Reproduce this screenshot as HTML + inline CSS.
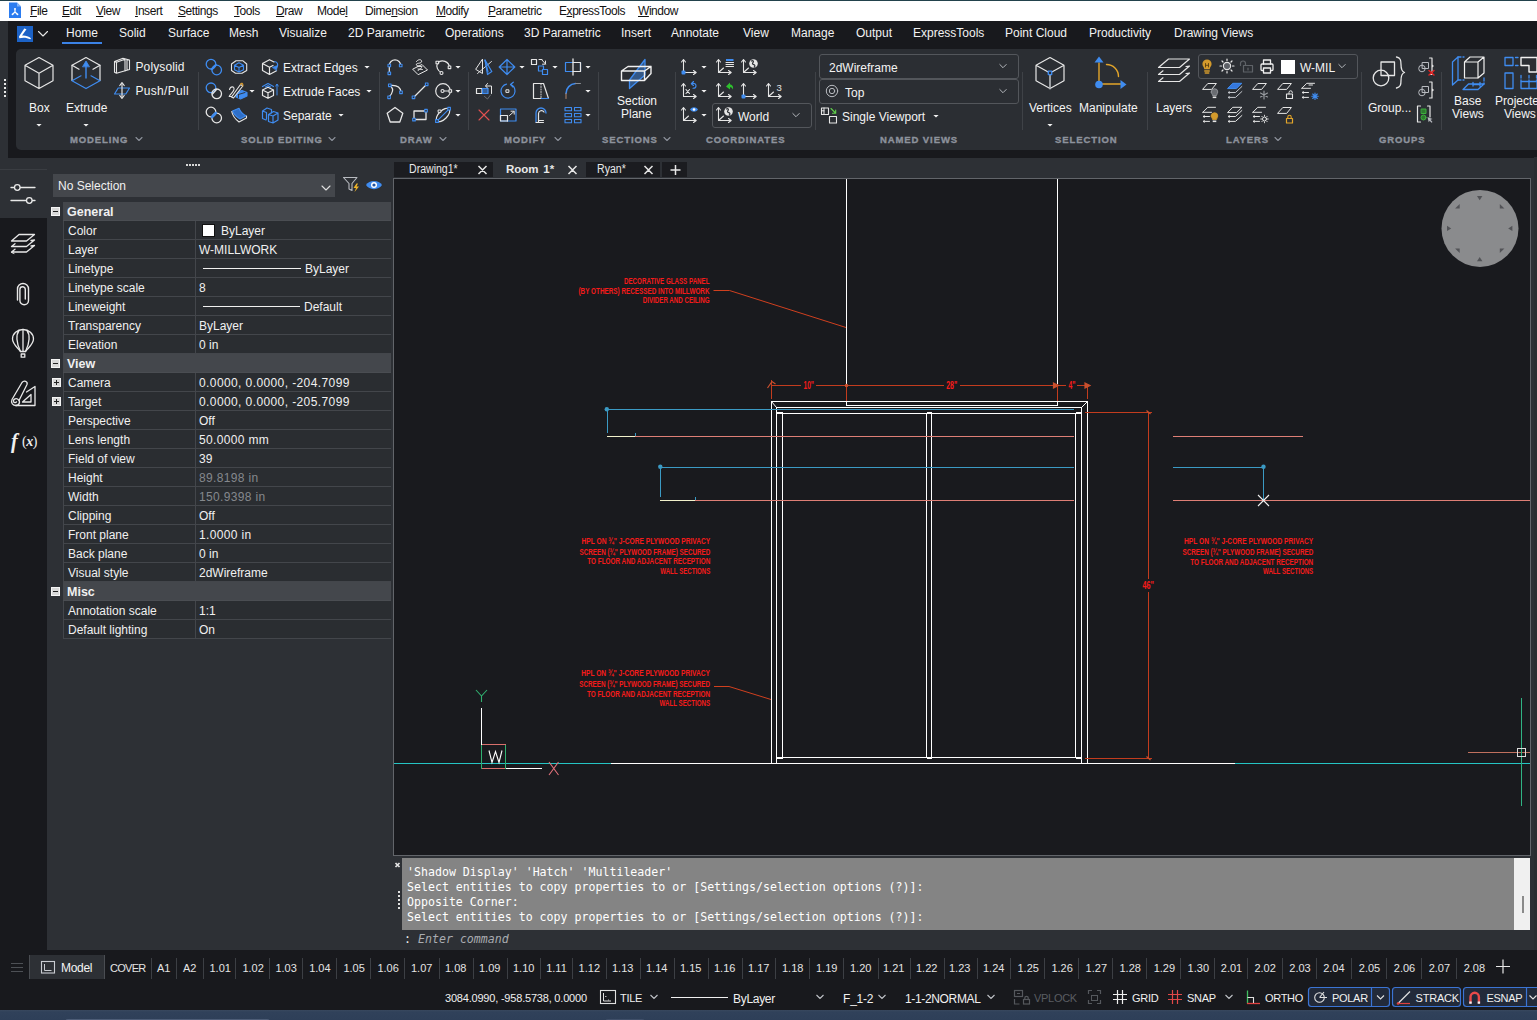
<!DOCTYPE html>
<html lang="en">
<head>
<meta charset="utf-8">
<title>Room 1 - CAD</title>
<style>
*{box-sizing:border-box;margin:0;padding:0}
html,body{width:1537px;height:1020px;overflow:hidden;background:#18191d}
body{position:relative;font-family:"Liberation Sans",sans-serif;font-size:12px;color:#fff;-webkit-font-smoothing:antialiased}
.abs{position:absolute}
svg{position:absolute;overflow:visible}
.t{position:absolute;white-space:nowrap;line-height:1}
/* menu bar */
#menubar{position:absolute;left:0;top:0;width:1537px;height:21px;background:#fff;border-top:1px solid #22424c}
#menubar .t{color:#111;font-size:12px;top:4px;letter-spacing:-0.45px}
#menubar u{text-decoration-thickness:1px;text-underline-offset:1px}
/* ribbon */
#ribbonbg{position:absolute;left:0;top:21px;width:1537px;height:137px;background:#18191d}
#leftstrip{position:absolute;left:0;top:21px;width:8px;height:137px;background:#2d3035}
#tabs .t{font-size:12px;top:27px;color:#f2f2f2}
#ribbon{position:absolute;left:16px;top:49px;width:1540px;height:101px;background:#2b2e33;border-radius:5px}
.sep{position:absolute;width:1px;top:72px;height:58px;background:#3f4247}
.glabel{position:absolute;top:134.700px;font-size:9.5px;font-weight:bold;letter-spacing:0.9px;color:#8d929c;white-space:nowrap;line-height:1;-webkit-text-stroke:0.35px #8d929c}
.rt{position:absolute;white-space:nowrap;line-height:1;font-size:12px;color:#f4f4f4;margin-top:1px}
.dd{position:absolute;border:1px solid #53565b;border-radius:3px;background:#2b2e33}
/* main */
#mainbg{position:absolute;left:0;top:158px;width:1537px;height:792px;background:#2d3035}
#iconstrip{position:absolute;left:0;top:170px;width:47px;height:780px;background:#18191d}

/* left panel */
#props{position:absolute;left:0;top:0;font-size:12px;color:#f0f0f0}
.ph{position:absolute;left:63px;width:328px;height:19px;background:#44474c;font-weight:bold;font-size:12.5px;line-height:19px;border-bottom:1px solid #4a4d52}
.ph span{position:absolute;left:4px;top:1px}
.pm{position:absolute;left:-12px;top:5px;width:9px;height:9px;background:#d8d8d8;border:1px solid #f4f4f4}
.pm b{position:absolute;left:1px;top:3px;width:5px;height:1px;background:#222}
.pm s{position:absolute;left:3px;top:1px;width:1px;height:5px;background:#222}
.pr{position:absolute;left:63px;width:328px;height:19px;line-height:19px;border-bottom:1px solid #43464b;border-left:1px solid #43464b;background:#2a2d31}
.pl{position:absolute;left:4px;top:1px;white-space:nowrap}
.pv{position:absolute;left:131px;top:0;width:197px;height:18px;border-left:1px solid #43464b;padding-left:3px;padding-top:1px;white-space:nowrap}
.pg{color:#85888d}
.sw{position:absolute;left:6px;top:3px;width:13px;height:13px;background:#fff;border:1px solid #111}
.ln{position:absolute;left:7px;top:9px;height:1px;background:#f0f0f0}
.dtab{position:absolute;top:162px;height:15px;background:#1b1c20}
.dtab span{position:absolute;top:1px;white-space:nowrap;font-size:12px;line-height:1;color:#e8e8e8;display:inline-block;transform:scaleX(.88);transform-origin:left center}

.cm{position:absolute;left:407px;margin-top:1px;font-family:"DejaVu Sans Mono","Liberation Mono",monospace;font-size:11.6px;line-height:1;color:#fff;white-space:pre}
.lt{position:absolute;top:963px;font-size:11px;line-height:1;color:#e4e4e4;white-space:nowrap}
.ls{position:absolute;top:958px;width:1px;height:21px;background:#3c3f44}
.st{position:absolute;top:993px;font-size:11px;line-height:1;color:#f0f0f0;white-space:nowrap;letter-spacing:-0.3px}
</style>
</head>
<body>
<div id="menubar">
<span class="t" style="left:30px"><u>F</u>ile</span>
<span class="t" style="left:62px"><u>E</u>dit</span>
<span class="t" style="left:96px"><u>V</u>iew</span>
<span class="t" style="left:135px"><u>I</u>nsert</span>
<span class="t" style="left:178px"><u>S</u>ettings</span>
<span class="t" style="left:234px"><u>T</u>ools</span>
<span class="t" style="left:276px"><u>D</u>raw</span>
<span class="t" style="left:317px">Mode<u>l</u></span>
<span class="t" style="left:365px">Dime<u>n</u>sion</span>
<span class="t" style="left:436px"><u>M</u>odify</span>
<span class="t" style="left:488px"><u>P</u>arametric</span>
<span class="t" style="left:559px">E<u>x</u>pressTools</span>
<span class="t" style="left:638px"><u>W</u>indow</span>
</div>
<div id="ribbonbg"></div>
<div id="leftstrip"></div>
<div id="tabs">
<span class="t" style="left:66px">Home</span>
<span class="t" style="left:119px">Solid</span>
<span class="t" style="left:168px">Surface</span>
<span class="t" style="left:229px">Mesh</span>
<span class="t" style="left:279px">Visualize</span>
<span class="t" style="left:348px">2D Parametric</span>
<span class="t" style="left:445px">Operations</span>
<span class="t" style="left:524px">3D Parametric</span>
<span class="t" style="left:621px">Insert</span>
<span class="t" style="left:671px">Annotate</span>
<span class="t" style="left:743px">View</span>
<span class="t" style="left:791px">Manage</span>
<span class="t" style="left:856px">Output</span>
<span class="t" style="left:913px">ExpressTools</span>
<span class="t" style="left:1005px">Point Cloud</span>
<span class="t" style="left:1089px">Productivity</span>
<span class="t" style="left:1174px">Drawing Views</span>
<div class="abs" style="left:62px;top:41.500px;width:40px;height:2.500px;background:#3b82e6"></div>
</div>
<div id="ribbon"></div>
<!-- ribbon separators -->
<div class="sep" style="left:198px"></div>
<div class="sep" style="left:379px"></div>
<div class="sep" style="left:468px"></div>
<div class="sep" style="left:598px"></div>
<div class="sep" style="left:675px"></div>
<div class="sep" style="left:815px"></div>
<div class="sep" style="left:1022px"></div>
<div class="sep" style="left:1147px"></div>
<div class="sep" style="left:1361px"></div>
<div class="sep" style="left:1441px"></div>
<!-- group labels -->
<span class="glabel" style="left:70px">MODELING</span>
<span class="glabel" style="left:241px">SOLID EDITING</span>
<span class="glabel" style="left:400px">DRAW</span>
<span class="glabel" style="left:504px">MODIFY</span>
<span class="glabel" style="left:602px">SECTIONS</span>
<span class="glabel" style="left:706px">COORDINATES</span>
<span class="glabel" style="left:880px">NAMED VIEWS</span>
<span class="glabel" style="left:1055px">SELECTION</span>
<span class="glabel" style="left:1226px">LAYERS</span>
<span class="glabel" style="left:1379px">GROUPS</span>
<!-- ribbon text -->
<span class="rt" style="left:29px;top:101px">Box</span>
<span class="rt" style="left:66px;top:101px">Extrude</span>
<span class="rt" style="left:135.500px;top:60px;letter-spacing:.12px">Polysolid</span>
<span class="rt" style="left:135.500px;top:84px;letter-spacing:.3px">Push/Pull</span>
<span class="rt" style="left:283px;top:61px">Extract Edges</span>
<span class="rt" style="left:283px;top:85px">Extrude Faces</span>
<span class="rt" style="left:283px;top:109px">Separate</span>
<span class="rt" style="left:617px;top:94px">Section</span>
<span class="rt" style="left:621px;top:107px">Plane</span>
<div class="dd" style="left:712px;top:103px;width:100px;height:25px"></div>
<span class="rt" style="left:738px;top:110px">World</span>
<div class="dd" style="left:819px;top:54px;width:200px;height:25px"></div>
<span class="rt" style="left:829px;top:61px">2dWireframe</span>
<div class="dd" style="left:819px;top:79px;width:200px;height:25px"></div>
<span class="rt" style="left:845px;top:86px">Top</span>
<span class="rt" style="left:842px;top:110px">Single Viewport</span>
<span class="rt" style="left:1029px;top:101px">Vertices</span>
<span class="rt" style="left:1079px;top:101px">Manipulate</span>
<span class="rt" style="left:1156px;top:101px">Layers</span>
<div class="dd" style="left:1198px;top:54px;width:160px;height:25px"></div>
<span class="rt" style="left:1300px;top:61px">W-MIL</span>
<span class="rt" style="left:1368px;top:101px">Group...</span>
<span class="rt" style="left:1454px;top:94px">Base</span>
<span class="rt" style="left:1452px;top:107px">Views</span>
<span class="rt" style="left:1495px;top:94px">Projected</span>
<span class="rt" style="left:1504px;top:107px">Views</span>

<svg id="ricons" width="1537" height="160" viewBox="0 0 1537 160" style="left:0;top:0" fill="none" stroke-linecap="round" stroke-linejoin="round">
<defs>
<path id="dar" d="M-2.600 -1.100h5.200l-2.600 2.700z" fill="#f2f2f2" stroke="none"/>
<path id="chev" d="M-3 -1.5l3 3l3 -3" stroke="#8d929c" stroke-width="1.1" fill="none"/>
<path id="chevw" d="M-3.200 -1.500l3.200 3.200l3.200 -3.200" stroke="#b4b7bc" stroke-width="1" fill="none"/>
</defs>
<!-- app button -->
<rect x="17" y="26" width="16" height="16" fill="#1c62c6" stroke="none"/>
<path d="M24.300 28.500L26.500 29.300L22 35.500C25 35.200 28.500 36.200 31 38.300L30.300 39.300C27 37.600 23 37.300 19.300 38.300L19 36.500z" fill="#fff" stroke="none"/>
<path d="M38.500 31.500l4.500 4.500l4.500-4.500" stroke="#e8e8e8" stroke-width="1.1"/>
<!-- menubar doc icon -->
<path d="M9 2.500h8l4 4v11.500h-12z" fill="#2b7cf0" stroke="none"/><path d="M17 2.500v4h4z" fill="#7fb2f8" stroke="none"/>
<path d="M15 9V12M15 12L12.800 14M15 12L17.200 14" stroke="#fff" stroke-width="1.200"/><circle cx="15" cy="8.800" r="0.900" fill="#fff" stroke="none"/><circle cx="12.500" cy="14.300" r="0.900" fill="#fff" stroke="none"/><circle cx="17.500" cy="14.300" r="0.900" fill="#fff" stroke="none"/>
<!-- grip dots left -->
<g fill="#e8e8e8" stroke="none"><rect x="4" y="79" width="2" height="2"/><rect x="4" y="83" width="2" height="2"/><rect x="4" y="87" width="2" height="2"/><rect x="4" y="91" width="2" height="2"/><rect x="4" y="95" width="2" height="2"/></g>
<!-- group label chevrons -->
<use href="#chev" x="139" y="139"/><use href="#chev" x="332" y="139"/><use href="#chev" x="443" y="139"/><use href="#chev" x="558" y="139"/><use href="#chev" x="667" y="139"/><use href="#chev" x="1278" y="139"/>
<!-- dropdown arrows -->
<use href="#dar" x="39" y="125"/><use href="#dar" x="86" y="125"/>
<use href="#dar" x="367" y="67"/><use href="#dar" x="369" y="91"/><use href="#dar" x="341" y="115"/><use href="#dar" x="252" y="91"/>
<use href="#dar" x="458" y="67"/><use href="#dar" x="458" y="91"/><use href="#dar" x="458" y="115"/>
<use href="#dar" x="522" y="67"/><use href="#dar" x="555" y="67"/><use href="#dar" x="588" y="67"/><use href="#dar" x="588" y="91"/><use href="#dar" x="588" y="115"/>
<use href="#dar" x="704" y="67"/><use href="#dar" x="704" y="91"/><use href="#dar" x="704" y="115"/>
<use href="#dar" x="936" y="116"/><use href="#dar" x="1050" y="125"/>
<use href="#chevw" x="796" y="115"/><use href="#chevw" x="1003" y="66"/><use href="#chevw" x="1003" y="91"/><use href="#chevw" x="1342" y="66"/>

<!-- ===== MODELING ===== -->
<g transform="translate(39,73)" stroke="#e6e6e6" stroke-width="1.2">
<path d="M0 -15.500L14 -7.700V7.800L0 15.600L-14 7.800V-7.700zM-14 -7.700L0 0.300L14 -7.700M0 0.300V15.600"/>
</g>
<g transform="translate(86,73)" stroke-width="1.2">
<path d="M-14 7.500V-7.700L0 -15.500L14 -7.700V7.500" stroke="#e6e6e6"/>
<path d="M-14 -7.700L-7 -3.700M14 -7.700L7 -3.700" stroke="#e6e6e6"/>
<path d="M-14 7.700L0 15.600L14 7.700M-14 7.700L-5 2.800M14 7.700L5 2.800" stroke="#3f8cf0"/>
<path d="M0 5V-7" stroke="#3f8cf0" stroke-width="1.4"/>
<path d="M-3.300 -6.500L0 -12L3.300 -6.500z" fill="#3f8cf0" stroke="#3f8cf0" stroke-width="0.8"/>
</g>
<!-- polysolid -->
<g transform="translate(122,66)" stroke="#e6e6e6" stroke-width="1.1">
<path d="M-7.500 -4.500L1 -7.800L7.500 -6V3.500L-5.500 7.300L-7.500 6.300zM-7.500 -4.500L-5.500 -3.700V7.300M-5.500 -3.700L3 -6.800V5M5 -6.500V4.300M1 -7.800L3 -6.800"/>
</g>
<!-- push/pull -->
<g transform="translate(122,90.500)" stroke-width="1.2">
<path d="M-7.500 3.500L-3.800 -2.500H7.500L3.800 3.500z" stroke="#3f8cf0"/>
<path d="M0 -6V6" stroke="#e6e6e6"/>
<path d="M-2.200 -5L0 -7.800L2.200 -5M-2.200 5L0 7.800L2.200 5" stroke="#e6e6e6"/>
</g>

<!-- ===== SOLID EDITING ===== -->
<!-- union -->
<g transform="translate(214,67)" stroke-width="1.3">
<circle cx="-3" cy="-2.800" r="4.800" stroke="#3f8cf0"/><circle cx="2.700" cy="3" r="4.800" stroke="#3f8cf0"/>
<path d="M-2.200 2.200L1.800 -2" stroke="#3f8cf0" stroke-width="2.200"/>
</g>
<!-- subtract -->
<g transform="translate(214,91)" stroke-width="1.3">
<circle cx="-3" cy="-3.200" r="4.800" stroke="#3f8cf0"/><circle cx="2.700" cy="2.800" r="4.800" stroke="#e6e6e6"/>
<path d="M-1.500 3L2.500 -1.500" stroke="#e6e6e6" stroke-width="1.200"/>
</g>
<!-- intersect -->
<g transform="translate(214,115)" stroke-width="1.3">
<circle cx="-3" cy="-3" r="4.800" stroke="#e6e6e6"/><circle cx="2.700" cy="3" r="4.800" stroke="#e6e6e6"/>
<path d="M-2 2L1.800 -2" stroke="#3f8cf0" stroke-width="2.600"/>
</g>
<!-- col2 row1: solid cube with blue inner -->
<g transform="translate(239,67)" stroke-width="1.1">
<path d="M-7.500 -3L-3 -6.200H4L7.700 -3V3.500L3 6.300H-3.500L-7.500 3.500z" stroke="#e6e6e6"/>
<path d="M-4.500 -1.800L0 -4.200L4.500 -1.800V2.800L0 5L-4.500 2.800zM-4.500 -1.800L0 0.500L4.500 -1.800M0 0.500V5" stroke="#3f8cf0"/>
</g>
<!-- col2 row2: pencil + blue solid -->
<g transform="translate(237,91)" stroke-width="1.1">
<path d="M-7.500 -1.500c1-3.500 5-3.500 4.500 0c-0.500 2.500-4 5-4.800 7h5" stroke="#e6e6e6"/>
<path d="M-1 1L5 -0.500L10 1.500V5L3.500 8L-1 6z" fill="#3f8cf0" stroke="#3f8cf0"/>
<path d="M1.500 3.500L8 1.500M1.500 3.500V7" stroke="#2b2e33" stroke-width="0.9"/>
<path d="M-5.500 6L3.500 -6.500L5.800 -5L-3.500 7z" stroke="#e6e6e6" fill="#2b2e33"/>
<path d="M3.500 -6.500c0.500-2 3-1.500 2.300 1.500" stroke="#e0a030"/>
</g>
<!-- col2 row3: blue curved surface -->
<g transform="translate(239,115)" stroke-width="1.1">
<path d="M-6.500 -4L0 -6.800C1.500 -3 4 -0.500 7 0.800L1 4C-2.500 2 -5 -0.500 -6.500 -4z" fill="#2f6fc8" stroke="#3f8cf0"/>
<path d="M-7.300 -3.500C-6.500 0.500 -4 4 0 7L7.500 3V1" stroke="#e6e6e6"/>
</g>
<!-- extract edges -->
<g transform="translate(270,67)" stroke-width="1.2">
<path d="M-7.500 -3.500L-0.500 -7.300L4 -5M-7.500 -3.500V3.500L-0.500 7.500L6.500 3.800M-7.500 -3.500L-0.500 0.300V7.500M-0.500 0.300L3 -1.500" stroke="#e6e6e6"/>
<path d="M4.500 -5.500c3 0.500 4 3 2.500 5.500" stroke="#3f8cf0"/>
<path d="M2.500 0.300L7.500 -1.500L6.500 3.200z" fill="#3f8cf0" stroke="#3f8cf0" stroke-width="0.6"/>
</g>
<!-- extrude faces -->
<g transform="translate(268,91)" stroke-width="1.2">
<path d="M-5.500 -1L0 -3.800L5.500 -1V4.500L0 7.300L-5.500 4.500zM-5.500 -1L0 1.800L5.500 -1M0 1.800V7.300" stroke="#e6e6e6"/>
<path d="M-5.500 -4.500L0 -7.500L5.500 -4.500M-2.500 -4L0 -5.300L2.500 -4" stroke="#3f8cf0"/>
<path d="M9 4V-6.500M7.800 -5L9 -7L10.200 -5" stroke="#3f8cf0" stroke-width="1"/>
</g>
<!-- separate -->
<g transform="translate(270,115)" stroke-width="1.2" stroke="#3f8cf0">
<path d="M-7.500 -4L-3 -7L1.500 -5.500V-2M-7.500 -4V3.500L-4 5M-7.500 -4L-3.500 -2.500V4"/>
<path d="M-1.500 -0.500L3.500 -3.500L8 -2V5L3 8L-1.500 6.500zM-1.500 -0.500L3 1L8 -2M3 1V8"/>
</g>
<!-- ===== DRAW ===== -->
<g stroke-width="1.2">
<!-- arc 3pt -->
<g transform="translate(395,67)">
<path d="M-5.700 6V-1.500a5.700 5.700 0 0 1 11.400 0" stroke="#e6e6e6"/>
<g stroke="#3f8cf0" fill="#2b2e33" stroke-width="1.1"><rect x="-7" y="5" width="2.600" height="2.600"/><rect x="-7" y="-2.800" width="2.600" height="2.600"/><rect x="4.400" y="-2.800" width="2.600" height="2.600"/></g>
</g>
<!-- 3d polyline / sketch -->
<g transform="translate(420,67)" stroke="#e6e6e6" stroke-width="1">
<path d="M-7 2L2 -2.500L7.500 3L-1.500 7.500z"/>
<path d="M-3.500 -5.500c2-3 6-2 5 0.500c-1 2-6 0.500-5 3c1 2 5 0.500 5 2.500c0 2-4 1.500-3.500 3"/>
<path d="M-3 -1l5 0.500M-2 2l4.500 0.500" stroke-width="0.9"/>
</g>
<!-- arc start center end -->
<g transform="translate(443,67)">
<path d="M-5.500 -4a7 7 0 0 1 12 4.500M-5.500 -4a7 7 0 0 0 4 9.500" stroke="#e6e6e6"/>
<g stroke="#e6e6e6" fill="#2b2e33" stroke-width="1.1"><rect x="-7" y="-5.800" width="2.600" height="2.600"/><rect x="5.200" y="-1" width="2.600" height="2.600"/><circle cx="-1.500" cy="6" r="1.500"/></g>
</g>
<!-- spline -->
<g transform="translate(395,91)">
<path d="M-4.500 -5.500c6-0.500 10 2 10.500 6.500M-3.500 -4c2.500 3 1 6-2 9.500" stroke="#e6e6e6"/>
<g stroke="#3f8cf0" fill="#2b2e33" stroke-width="1.1"><rect x="-6.500" y="-7" width="2.600" height="2.600"/><rect x="4.700" y="0" width="2.600" height="2.600"/><rect x="-7.200" y="5" width="2.600" height="2.600"/></g>
</g>
<!-- line -->
<g transform="translate(420,91)">
<path d="M-6 6L6.500 -6.500" stroke="#e6e6e6"/>
<g stroke="#3f8cf0" fill="#2b2e33" stroke-width="1.1"><rect x="-7.800" y="5" width="2.600" height="2.600"/><rect x="5.400" y="-8" width="2.600" height="2.600"/></g>
</g>
<!-- circle -->
<g transform="translate(443,91)">
<circle cx="0" cy="0" r="7.300" stroke="#e6e6e6"/>
<path d="M0 0H7" stroke="#e6e6e6"/>
<circle cx="-0.500" cy="0" r="1.500" stroke="#e6e6e6" fill="#2b2e33" stroke-width="1.1"/><rect x="6" y="-1.300" width="2.600" height="2.600" stroke="#e6e6e6" fill="#2b2e33" stroke-width="1.1"/>
</g>
<!-- polygon -->
<g transform="translate(395,115)"><path d="M0 -7.500L7.800 -1.800L4.800 7H-4.800L-7.800 -1.800z" stroke="#e6e6e6" stroke-width="1.300"/></g>
<!-- rectangle -->
<g transform="translate(420,115)">
<rect x="-6" y="-4" width="12" height="8.500" stroke="#e6e6e6" stroke-width="1.300"/>
<g stroke="#3f8cf0" fill="#2b2e33" stroke-width="1.1"><rect x="-7.300" y="3.300" width="2.600" height="2.600"/><rect x="4.700" y="-5.600" width="2.600" height="2.600"/></g>
</g>
<!-- ellipse -->
<g transform="translate(443,115)">
<ellipse cx="0" cy="0" rx="8.500" ry="4.300" transform="rotate(-45)" stroke="#e6e6e6"/>
<path d="M-5.800 5.800L6.200 -6.200" stroke="#3f8cf0"/>
<g stroke="#3f8cf0" fill="#2b2e33" stroke-width="1.1"><rect x="-7.400" y="4.600" width="2.800" height="2.800"/><rect x="4.800" y="-7.600" width="2.600" height="2.600"/></g>
<rect x="-4.500" y="-5" width="2.400" height="2.400" stroke="#e6e6e6" fill="#2b2e33" stroke-width="1"/>
</g>
</g>
<!-- ===== MODIFY ===== -->
<g stroke-width="1.2">
<!-- mirror -->
<g transform="translate(484,67)">
<path d="M-1.500 -7.500V6.500L-8 2.500z" stroke="#e6e6e6" stroke-width="1"/>
<path d="M-6.500 6.500L7.500 -5.500" stroke="#e6e6e6" stroke-width="0.9"/>
<path d="M1 -7L7.800 4.500L3.500 7.500z" stroke="#3f8cf0"/><path d="M1 -7L4 5" stroke="#3f8cf0"/>
</g>
<!-- move -->
<g transform="translate(507,67)" stroke="#3f8cf0">
<path d="M0 -7.500L7.800 0L0 7.500L-7.800 0zM0 -7.500V7.500M-7.800 0H7.800"/>
</g>
<!-- copy -->
<g transform="translate(540,67)">
<rect x="-8.500" y="-7.500" width="5" height="5" stroke="#e6e6e6"/>
<path d="M-1 -7.500H2M1.500 -7.500L5.500 -3M5.500 -6V-2.800H2.500" stroke="#e6e6e6" stroke-width="1"/>
<rect x="-1.500" y="-1" width="5" height="5" stroke="#3f8cf0"/><rect x="2.500" y="2.500" width="5" height="5" stroke="#3f8cf0" fill="#2b2e33"/>
</g>
<!-- trim/extend -->
<g transform="translate(573,67)">
<rect x="-7.500" y="-4.500" width="15" height="9" stroke="#3f8cf0"/><path d="M0 -4.500H7.500V4.500H0" stroke="#e6e6e6"/><path d="M0 -8V8" stroke="#e6e6e6" stroke-width="1.300"/>
</g>
<!-- stretch -->
<g transform="translate(484,91)">
<rect x="-7.500" y="-2.500" width="5.500" height="5" stroke="#e6e6e6"/>
<rect x="-1.500" y="-2.500" width="5.500" height="5" stroke="#3f8cf0" fill="#3f8cf0" fill-opacity="0.550"/>
<path d="M2 -5H7.500V2.500M3.500 -7.500L1.500 -5L3.500 -3" stroke="#e6e6e6" stroke-width="1"/>
<path d="M0.500 5.500L3.500 8L6.500 4" stroke="#6a6d72" stroke-width="1"/>
</g>
<!-- rotate -->
<g transform="translate(508,91)">
<path d="M-1.500 -6.800A7 7 0 1 0 7 0.500C7 -3 5.500 -5.500 3 -6.500" stroke="#3f8cf0" stroke-width="1.200"/>
<path d="M5.300 -8.800L2.500 -6.500L5 -4" stroke="#3f8cf0"/>
<rect x="-1.700" y="-1.200" width="2.600" height="2.600" stroke="#e6e6e6" stroke-width="1"/>
</g>
<!-- scale/taper -->
<g transform="translate(541,91)">
<path d="M-7.500 -7.500H2.500L7.500 7.500H-7.500z" stroke="#e6e6e6"/><path d="M0 -7V7" stroke="#e6e6e6" stroke-width="0.9" stroke-dasharray="1 1.500"/><path d="M0.500 7.500H7.500" stroke="#3f8cf0"/>
</g>
<!-- fillet -->
<g transform="translate(573,91)">
<path d="M-7 2.500A10 10 0 0 1 2.500 -7.500" stroke="#3f8cf0" stroke-width="1.600"/>
<path d="M2.500 -7.500H7.500" stroke="#8a8d92" stroke-width="1"/><path d="M-7 2.500V7.500" stroke="#b9886a" stroke-width="1"/>
</g>
<!-- erase -->
<g transform="translate(484,115)"><path d="M-5 -5L5 5M5 -5L-5 5" stroke="#e25050" stroke-width="1.100"/></g>
<!-- scale -->
<g transform="translate(508,115)">
<rect x="-7.500" y="-6" width="15.500" height="12" stroke="#3f8cf0"/>
<path d="M-7.500 0.500H-0.500V6" stroke="#e6e6e6"/><path d="M-7.500 0.500V6H-0.500" stroke="#e6e6e6"/>
<path d="M1.500 0.500L6 -3.500M3 -3.800H6.200V-0.800" stroke="#e6e6e6" stroke-width="1"/>
</g>
<!-- offset -->
<g transform="translate(541,115)">
<path d="M-5 7V-2a5 5 0 0 1 10 0" stroke="#3f8cf0" stroke-width="1.300"/>
<path d="M-2.500 7V-1.500a3 3 0 0 1 5.500 -1.500" stroke="#e6e6e6"/><path d="M-5 7.500H2.500M-2.500 5.500H2.500" stroke="#e6e6e6" stroke-width="1"/>
</g>
<!-- array -->
<g transform="translate(573,115)" stroke="#3f8cf0" stroke-width="1.100">
<rect x="-8" y="-7.500" width="6.500" height="3.300"/><rect x="1.500" y="-7.500" width="6.500" height="3.300"/>
<rect x="-8" y="-1.500" width="6.500" height="3.300"/><rect x="1.500" y="-1.500" width="6.500" height="3.300"/>
<rect x="-8" y="4.500" width="6.500" height="3.300"/><rect x="1.500" y="4.500" width="6.500" height="3.300"/>
</g>
</g>
<!-- ===== SECTIONS ===== -->
<g transform="translate(636,73)" stroke-width="1.300">
<path d="M-6.500 7L9 -13.500V2L-6.500 15.500z" fill="#3f8cf0" fill-opacity="0.450" stroke="#3f8cf0"/>
<path d="M-14.500 -2L-8 -6.500H15V0.500L8.500 7.500M15 -6.500L8.500 -2M-14.500 -2H8.500V7.500H-14.500z" stroke="#f0f0f0" stroke-width="1.400"/>
</g>
<!-- ===== COORDINATES ===== -->
<defs>
<g id="ucs" stroke="#e6e6e6" stroke-width="1.100" fill="none"><path d="M-5.500 -7V5.500H7M-7.500 -5L-5.500 -7.500L-3.500 -5M4.500 3.500L7.200 5.500L4.500 7.500"/></g>
<g id="ucs3" stroke="#e6e6e6" stroke-width="1.100" fill="none"><path d="M-5.500 -7V5.500H7M-7.500 -5L-5.500 -7.500L-3.500 -5M4.500 3.500L7.200 5.500L4.500 7.500M-5.500 5.500L-0.500 1"/></g>
<g id="globe"><circle cx="0" cy="0" r="4.300" fill="#e6e6e6" stroke="none"/><path d="M-2 -2.500c1.500-1 2.500 0.500 1.500 1.500c-1 0.800-0.500 2 0.800 2.200c1.200 0.200 1.500 1.300 0.500 2.300" stroke="#2b2e33" stroke-width="1.200" fill="none"/></g>
</defs>
<g>
<g transform="translate(689,67)"><use href="#ucs"/><rect x="-7.500" y="3.500" width="4" height="4" rx="1" fill="#3f8cf0"/></g>
<g transform="translate(724,67)"><use href="#ucs3"/><rect x="2" y="-8" width="7.500" height="2" fill="#3f8cf0"/><path d="M2 -4.500h7.500M2 -2.500h7.500M2 -0.500h7.500" stroke="#e6e6e6" stroke-width="1.100"/></g>
<g transform="translate(749,67)"><use href="#ucs3"/><use href="#globe" x="4.500" y="-3.500"/></g>
<g transform="translate(689,91)"><use href="#ucs"/><path d="M-3 -1.500L0.500 2.500M0.500 -1.500L-3 2.500" stroke="#e6e6e6" stroke-width="1.100"/><path d="M3 -7.500c2.500-0.500 4 0.500 4 2.500c0 1.500-1.500 2.300-3 2.300M4.500 -9.500L2.300 -7.300L4.500 -5.500" stroke="#3f8cf0" stroke-width="1.100" fill="none"/></g>
<g transform="translate(724,91)"><use href="#ucs3"/><path d="M2 -4.500L6 -8.500V-6.500C8.500 -6.500 9.500 -4 9 -1.500C8 -3.500 7 -4 6 -3.800V-1.500z" fill="#2ec02e"/></g>
<g transform="translate(749,91)"><use href="#ucs"/><rect x="-7.500" y="3.500" width="4" height="4" rx="1" fill="#3f8cf0"/></g>
<g transform="translate(774,91)"><use href="#ucs3"/><text x="2.500" y="-0.500" font-family="Liberation Sans, sans-serif" font-size="9.500" fill="#e6e6e6" stroke="none">3</text></g>
<g transform="translate(689,115)"><use href="#ucs3"/><path d="M1 -5.500c2-3 6-3 8 0c-2 3-6 3-8 0z" fill="#3f8cf0"/><circle cx="5" cy="-5.500" r="1.300" fill="#fff"/></g>
<g transform="translate(724,115)"><use href="#ucs3"/><use href="#globe" x="4.500" y="-3.500"/></g>
</g>
<!-- ===== NAMED VIEWS ===== -->
<g transform="translate(832,91)" stroke="#b8bbc0" stroke-width="1"><circle r="5.700"/><circle r="2.700"/></g>
<g transform="translate(829,115)" stroke-width="1.1">
<rect x="-7.500" y="-7" width="7" height="6.500" stroke="#e6e6e6"/><path d="M-5 -7V-0.500M-7.500 -4.200H-5" stroke="#e6e6e6" stroke-width="1"/>
<rect x="0.500" y="1.500" width="7" height="6.500" stroke="#e6e6e6"/>
<path d="M2 -6.500L6.500 -2M3.500 -1.800H6.700V-5" stroke="#5fcf4a" stroke-width="1.100"/>
</g>
<!-- ===== SELECTION ===== -->
<g transform="translate(1050,73)" stroke-width="1.200">
<path d="M0 -15.500L14 -7.700V7.800L0 15.600L-14 7.800V-7.700zM-14 -7.700L0 0L14 -7.700" stroke="#e6e6e6"/>
<path d="M0 0V15.600" stroke="#b0b3b8" stroke-width="1.700"/>
<rect x="-1.700" y="-1.800" width="3.400" height="3.400" fill="#2b2e33" stroke="#3f8cf0" stroke-width="1.300"/>
</g>
<g transform="translate(1110,73)">
<path d="M-11 11V-10M-11 11H11" stroke="#e3a52a" stroke-width="1.400"/>
<path d="M-3.500 -8.500A12 12 0 0 1 8.500 3.500" stroke="#e3a52a" stroke-width="1.400"/>
<circle cx="-11" cy="11.500" r="3.800" fill="#3f8cf0" stroke="none"/>
<path d="M-15.500 -10.500L-11 -16.500L-6.500 -10.500z" fill="#3f8cf0" stroke="none"/>
<path d="M10.500 7L16.500 11.500L10.500 16z" fill="#3f8cf0" stroke="none"/>
</g>
<!-- ===== LAYERS ===== -->
<g transform="translate(1174,73)" stroke="#e6e6e6" stroke-width="1.200">
<path d="M-5.500 -14H15.500L5.500 -5.500H-15.500z"/>
<path d="M12 -6.500L15.500 -7L5.500 1.500H-15.500L-11 -2.200"/>
<path d="M12 0.500L15.500 0L5.500 8.500H-15.500L-11 4.800"/>
</g>
<defs>
<g id="lyr" stroke="#e6e6e6" stroke-width="1" fill="none"><path d="M-7.200 -1.900L-2.200 -7.500H6.400L1.900 -1.900z"/></g>
<g id="lyr3" stroke="#e6e6e6" stroke-width="1" fill="none"><path d="M-7.200 -2.700L-2.200 -7.700H6.900L1.900 -2.700zM-6.500 1.500H0.500L6.900 -4.500M-6.500 6.400H0.500L6.900 0.500M-5.700 0.700L-6.900 1.500L-5.700 2.300M-5.700 5.600L-6.900 6.400L-5.700 7.200"/></g>
<g id="lyr3b" stroke="#e6e6e6" stroke-width="1" fill="none"><path d="M-7.200 -2.700L-2.200 -7.700H5.500M-6.500 1.500H-0.500M-6.500 6.400H-0.500M-5.700 0.700L-6.900 1.500L-5.700 2.300M-5.700 5.600L-6.900 6.400L-5.700 7.200M1.500 -2.700H-7.200"/></g>
<g id="bulb"><path d="M-3.300 -1.500a3.300 3.300 0 1 1 6.600 0c0 1.600-1.300 2-1.300 3.500h-4c0-1.500-1.300-1.900-1.300-3.500z"/><rect x="-1.800" y="3" width="3.600" height="1.600" fill="#e6e6e6" stroke="none"/></g>
</defs>
<!-- dropdown content -->
<g transform="translate(1207,66)"><path d="M-4.600 -2a4.600 4.600 0 1 1 9.200 0c0 2.200-1.700 3-1.900 5.300h-5.400c-0.200-2.300-1.900-3.100-1.900-5.300z" fill="#d39a2c"/><path d="M-2.300 5h4.600M-1.800 7h3.600" stroke="#d39a2c" stroke-width="1.300"/><path d="M-1.500 -2.500v3.500M1.500 -2.500v3.500M-1.500 -0.700h3" stroke="#5a3f0e" stroke-width="0.900"/></g>
<g transform="translate(1227,66)" stroke="#e6e6e6" stroke-width="1.200"><circle r="3.600" fill="#5d6066"/><path d="M0 -7V-5.500M0 5.500V7M-7 0H-5.500M5.500 0H7M-5 -5L-4 -4M4 4L5 5M-5 5L-4 4M4 -4L5 -5"/></g>
<g transform="translate(1247,67)" stroke="#5f6368" stroke-width="1.200"><rect x="-3.500" y="-1.500" width="9" height="6.500"/><path d="M-6.500 -1.500v-2a2.500 2.500 0 0 1 5 0v2M1 1v2"/></g>
<g transform="translate(1267,66.500)" stroke="#f0f0f0" stroke-width="1.300"><path d="M-3.500 -2.500V-6.500H3.500V-2.500"/><rect x="-6" y="-2.500" width="12" height="6.500" rx="1"/><rect x="-3.500" y="1.500" width="7" height="5" fill="#2b2e33"/></g>
<rect x="1281" y="60" width="14" height="14" fill="#ffffff" stroke="none"/>
<!-- layer tools row 1 -->
<g transform="translate(1210,91)"><use href="#lyr"/><g transform="translate(4.500,2.500)" fill="#6a6d72" stroke="#9a9da2" stroke-width="0.800"><use href="#bulb"/></g></g>
<g transform="translate(1235,91)"><path d="M-7.200 -2.700L-2.200 -7.700H6.900L1.900 -2.700z" fill="#3577dc" stroke="#3f8cf0" stroke-width="1"/><path d="M-6.500 1.500H0.500L6.900 -4.500M-6.500 6.400H0.500L6.900 0.500M-5.700 0.700L-6.900 1.500L-5.700 2.300M-5.700 5.600L-6.900 6.400L-5.700 7.200" stroke="#c4c7cc" stroke-width="1"/></g>
<g transform="translate(1260,91)"><use href="#lyr"/><path d="M4 0V8M0.500 2L7.500 6M0.500 6L7.500 2" stroke="#9a9da2" stroke-width="1.100"/></g>
<g transform="translate(1285,91)"><use href="#lyr"/><rect x="1.500" y="3" width="6" height="4.500" stroke="#e6e6e6" stroke-width="1.100"/><path d="M4 3V1.500a1.700 1.700 0 0 1 3.400 0" stroke="#e6e6e6" stroke-width="1"/></g>
<g transform="translate(1309,91)"><use href="#lyr3b"/><path d="M0 -6L3.500 -6" stroke="#e6e6e6"/><path d="M6 2V8.500M2.800 5.200H9.200M3.700 3L8.300 7.500M3.700 7.500L8.300 3" stroke="#3f8cf0" stroke-width="1.100"/></g>
<!-- layer tools row 2 -->
<g transform="translate(1210,115)"><use href="#lyr3b"/><g transform="translate(4.500,2.500)" fill="#d39a2c" stroke="#d39a2c" stroke-width="0.800"><use href="#bulb"/></g></g>
<g transform="translate(1235,115)"><use href="#lyr3"/></g>
<g transform="translate(1260,115)"><use href="#lyr3b"/><circle cx="4.500" cy="4" r="2" stroke="#e6e6e6" stroke-width="1"/><path d="M4.500 0.200v1M4.500 6.800v1M0.700 4h1M7.300 4h1M1.800 1.300l0.700 0.700M6.500 6l0.700 0.700M1.800 6.700l0.700-0.700M6.500 2l0.700-0.700" stroke="#e6e6e6" stroke-width="0.900"/></g>
<g transform="translate(1285,115)"><use href="#lyr"/><rect x="1.500" y="3.500" width="6" height="4.500" stroke="#e3a52a" stroke-width="1.200"/><path d="M2.800 3.500V2a1.700 1.700 0 0 1 3.400 0v1.500" stroke="#e3a52a" stroke-width="1.100"/></g>
<!-- ===== GROUPS ===== -->
<g transform="translate(1389,73)" stroke="#e6e6e6" stroke-width="1.300">
<circle cx="-8" cy="5" r="7.800"/><rect x="-8" y="-11" width="13.500" height="13.500"/>
<path d="M7.500 -16c4 1 4.500 3 4.500 7.500c0 4.500 0.500 7 3.500 8c-3 1-3.500 3.500-3.500 8c0 4.500-0.500 6.500-4.500 7.500"/>
</g>
<g transform="translate(1426,66)" stroke-width="1"><circle cx="-4" cy="2.500" r="3.300" stroke="#b8bbc0"/><rect x="-3.500" y="-3.500" width="6" height="6" stroke="#b8bbc0"/><path d="M3.500 -8H6V8.500H3.500" stroke="#e6e6e6" stroke-width="1.200"/><path d="M6 -1.500L8 0L6 1.500z" fill="#e6e6e6" stroke="none"/><path d="M3 4.500L8 9M8 4.500L3 9" stroke="#e02020" stroke-width="1.500"/></g>
<g transform="translate(1426,90)" stroke-width="1"><circle cx="-4" cy="2.500" r="3.300" stroke="#b8bbc0"/><rect x="-3.500" y="-3.500" width="6" height="6" stroke="#b8bbc0"/><path d="M3.500 -8H6V8H3.500" stroke="#e6e6e6" stroke-width="1.200"/><path d="M6 -1.500L8.200 0L6 1.500z" fill="#e6e6e6" stroke="none"/></g>
<g transform="translate(1424,114)" stroke-width="1"><path d="M-3.500 -8H-6.500V8H-3.500M3.500 -8H6V3" stroke="#e6e6e6" stroke-width="1.200"/><rect x="-2.500" y="-5" width="4.500" height="4.500" stroke="#3fae3f" fill="#2d7a2d"/><circle cx="-0.500" cy="3.500" r="2.500" stroke="#3fae3f" fill="#2d7a2d"/><path d="M3.500 3L8.500 5L6.500 5.800L8.500 8L7.500 8.800L5.700 6.700L4.700 8.200z" fill="#b8bbc0" stroke="none"/></g>
<!-- ===== VIEWS ===== -->
<g transform="translate(1468,73)" stroke-width="1.300">
<path d="M-15.500 -11L-10 -16V7L-15.500 12z" stroke="#3f8cf0"/><path d="M-10 -16H-4M-10 7H-4" stroke="#3f8cf0" stroke-dasharray="3 2"/>
<path d="M-5 16.500L0.500 11H16L10 16.500zM5 9.500V13M12 9.500V13M5 11.500H12" stroke="#3f8cf0"/>
<path d="M16 5V11" stroke="#3f8cf0" stroke-dasharray="3 2"/>
<path d="M-3.500 -11H10V5H-3.500zM-3.500 -11L2 -16H16L10 -11M16 -16V0L10 5" stroke="#f0f0f0" stroke-width="1.200"/>
</g>
<g transform="translate(1521,73)" stroke-width="1.300">
<rect x="-16" y="-15.500" width="8" height="8" stroke="#3f8cf0"/><rect x="-16" y="0" width="8" height="15.500" stroke="#3f8cf0"/>
<path d="M-5.500 -15.500H-2M-5.500 -7.500H-2" stroke="#3f8cf0" stroke-dasharray="2.500 2"/>
<path d="M0 -15.500H16V-1H8V-7.500H0z" stroke="#f0f0f0" stroke-width="1.400"/>
<path d="M0 2.500V8M8 2.500V8M15.500 2.500V8" stroke="#3f8cf0" stroke-dasharray="2.500 2"/>
<path d="M0 8.500H16V15.500H0zM8 8.500V15.500" stroke="#3f8cf0"/>
</g>

</svg>

<div id="mainbg"></div>
<div id="iconstrip"></div>

<!-- icon strip selected tab -->
<div class="abs" style="left:0;top:169px;width:47px;height:1px;background:#3a3d42"></div>
<div class="abs" style="left:0;top:170px;width:47px;height:48px;background:#2d3035"></div>
<!-- grip -->
<div class="abs" style="left:186px;top:164px;width:14px;height:2px;background:repeating-linear-gradient(90deg,#d8d8d8 0 2px,transparent 2px 3px)"></div>
<!-- selection dropdown -->
<div class="abs" style="left:53px;top:174px;width:282px;height:23px;background:#44474c"></div>
<span class="t" style="left:58px;top:180px;font-size:12px;color:#f0f0f0">No Selection</span>
<div id="props">

<div class="ph" style="top:202px"><i class="pm"><b></b></i><span>General</span></div>
<div class="pr" style="top:221px"><span class="pl">Color</span><span class="pv"><i class="sw"></i><span style="margin-left:22px">ByLayer</span></span></div>
<div class="pr" style="top:240px"><span class="pl">Layer</span><span class="pv">W-MILLWORK</span></div>
<div class="pr" style="top:259px"><span class="pl">Linetype</span><span class="pv"><i class="ln" style="width:98px"></i><span style="margin-left:106px">ByLayer</span></span></div>
<div class="pr" style="top:278px"><span class="pl">Linetype scale</span><span class="pv">8</span></div>
<div class="pr" style="top:297px"><span class="pl">Lineweight</span><span class="pv"><i class="ln" style="width:97px"></i><span style="margin-left:105px">Default</span></span></div>
<div class="pr" style="top:316px"><span class="pl">Transparency</span><span class="pv">ByLayer</span></div>
<div class="pr" style="top:335px"><span class="pl">Elevation</span><span class="pv">0 in</span></div>
<div class="ph" style="top:354px"><i class="pm"><b></b></i><span>View</span></div>
<div class="pr" style="top:373px"><i class="pm pp"><b></b><s></s></i><span class="pl">Camera</span><span class="pv" style="letter-spacing:.4px">0.0000, 0.0000, -204.7099</span></div>
<div class="pr" style="top:392px"><i class="pm pp"><b></b><s></s></i><span class="pl">Target</span><span class="pv" style="letter-spacing:.4px">0.0000, 0.0000, -205.7099</span></div>
<div class="pr" style="top:411px"><span class="pl">Perspective</span><span class="pv">Off</span></div>
<div class="pr" style="top:430px"><span class="pl">Lens length</span><span class="pv" style="letter-spacing:.35px">50.0000 mm</span></div>
<div class="pr" style="top:449px"><span class="pl">Field of view</span><span class="pv">39</span></div>
<div class="pr" style="top:468px"><span class="pl">Height</span><span class="pv pg" style="letter-spacing:.35px">89.8198 in</span></div>
<div class="pr" style="top:487px"><span class="pl">Width</span><span class="pv pg" style="letter-spacing:.35px">150.9398 in</span></div>
<div class="pr" style="top:506px"><span class="pl">Clipping</span><span class="pv">Off</span></div>
<div class="pr" style="top:525px"><span class="pl">Front plane</span><span class="pv" style="letter-spacing:.35px">1.0000 in</span></div>
<div class="pr" style="top:544px"><span class="pl">Back plane</span><span class="pv">0 in</span></div>
<div class="pr" style="top:563px"><span class="pl">Visual style</span><span class="pv">2dWireframe</span></div>
<div class="ph" style="top:582px"><i class="pm"><b></b></i><span>Misc</span></div>
<div class="pr" style="top:601px"><span class="pl">Annotation scale</span><span class="pv">1:1</span></div>
<div class="pr" style="top:620px"><span class="pl">Default lighting</span><span class="pv">On</span></div>
</div>
<!-- doc tabs -->

<div class="dtab" style="left:394px;width:99px"><span style="left:15px">Drawing1*</span></div>
<div class="dtab" style="left:495px;width:90px;background:#2d3035"><span style="left:11px;top:2px;font-weight:bold;transform:none;font-size:11.5px;word-spacing:1.5px">Room 1*</span></div>
<div class="dtab" style="left:586px;width:74px"><span style="left:11px">Ryan*</span></div>
<div class="dtab" style="left:662px;width:25px"></div>
<svg width="300" height="20" viewBox="390 160 300 20" style="left:390px;top:160px" fill="none" stroke="#e8e8e8" stroke-width="1.500"><path d="M478.500 166L486.500 174M486.500 166L478.500 174M568.500 166L576.500 174M576.500 166L568.500 174M644.500 166L652.500 174M652.500 166L644.500 174M675.500 165V175M670.500 170H680.500"/></svg>


<svg width="400" height="500" viewBox="0 0 400 500" style="left:0;top:0" fill="none" stroke-linecap="round" stroke-linejoin="round">
<!-- sliders -->
<g stroke="#e8e8e8" stroke-width="1.300"><path d="M11 187.500H14M20.500 187.500H35M11 200.500H26M32.500 200.500H35"/><circle cx="17.300" cy="187.500" r="2.800"/><circle cx="29.300" cy="200.500" r="2.800"/></g>
<!-- layers -->
<g transform="translate(23,244)" stroke="#e8e8e8" stroke-width="1.300"><path d="M-4 -9.500H11.500L3.500 -3H-11.500z"/><path d="M8 -3.500L11.500 -4L3.500 2.500H-11.500L-8 -0.300"/><path d="M8 2L11.500 1.500L3.500 8H-11.500L-8 5.200"/><path d="M-9.500 7L-11.500 8.500L-9 9.500" stroke-width="1"/></g>
<!-- paperclip -->
<g transform="translate(23,294)" stroke="#e8e8e8" stroke-width="1.400"><path d="M-5.500 6V-5a5.500 5.500 0 0 1 11 0V6.500a4.300 4.300 0 0 1 -8.600 0V-4.500a2.700 2.700 0 0 1 5.400 0V5"/></g>
<!-- balloon -->
<g transform="translate(23,343)" stroke="#e8e8e8" stroke-width="1.300"><path d="M-10.500 -4a10.500 9.500 0 0 1 21 0c0 5-5 8.500-8 12.500h-5c-3-4-8-7.500-8-12.500z"/><path d="M-4 -12.500c-3 4-3 12 1.500 21M4 -12.500c3 4 3 12-1.500 21M0 -13.500V8.500"/><rect x="-1.800" y="11" width="3.600" height="3.200"/></g>
<!-- sheet roll -->
<g transform="translate(23,394)" stroke="#e8e8e8" stroke-width="1.300"><path d="M-7 11.500c-3 0-5.500-2.500-4-6L-1 -11.500c2-2.500 6-1 5 2L-4 6.500"/><path d="M-7 11.500H12V-7.500L3.500 -2"/><path d="M-7 11.500c3.500 0 5-4.500 1.500-6.500c-2-1-4.500 0.500-4 2.500c0.500 1.500 2.500 1.500 3 0.300"/><path d="M-0.500 8H8V0.500z"/></g>
<!-- filter -->
<g transform="translate(351,184)"><path d="M-7.500 -6.500H6L1 -0.500V6.500L-2 5V-0.500z" stroke="#b8bbc0" stroke-width="1.100"/><path d="M5.500 -0.500L2.500 4H5L3.500 8L8 2.500H5.500L7 -0.500z" fill="#f0b428" stroke="none"/></g>
<!-- eye -->
<g transform="translate(374,185)"><path d="M-8 0c3-5.500 13-5.500 16 0c-3 5.500-13 5.500-16 0z" fill="#3f8cf0" stroke="none"/><circle r="3" fill="#fff" stroke="none"/><circle r="1.600" fill="#1d4f9e" stroke="none"/></g>
<!-- dropdown chevron -->
<path d="M322 186l4 4l4-4" stroke="#e0e0e0" stroke-width="1.100"/>
</svg>
<span class="t" style="left:11px;top:431px;font-family:'Liberation Serif',serif;font-style:italic;font-weight:bold;font-size:20px;color:#f0f0f0">f</span>
<span class="t" style="left:22px;top:435px;font-family:'Liberation Serif',serif;font-style:italic;font-weight:bold;font-size:14px;color:#f0f0f0;letter-spacing:-0.5px"><span style="font-style:normal;font-weight:normal">(</span>x<span style="font-style:normal;font-weight:normal">)</span></span>

<div class="abs" style="left:393px;top:178px;width:1138px;height:678px;background:#191a1e;border:1px solid #62656a"></div>
<svg id="dwg" width="1537" height="1020" viewBox="0 0 1537 1020" style="left:0;top:0" fill="none" shape-rendering="crispEdges">
<g stroke="#ffffff" stroke-width="1">
<!-- upper glass rect -->
<path d="M846.500 179V405.500H1057.500V179"/>
<!-- outer frame -->
<path d="M771.500 763V401.500H1087.500V763"/>
<path d="M776.500 763V407.500H1081.500V763"/>
<path d="M776.500 413.500H1081.500M782.500 413.500V757.500M1075.500 413.500V757.500M776.500 757.500H1081.500"/>
<path d="M776.500 412.500H782.500M776.500 758.500H782.500M1075.500 412.500H1081.500M1075.500 758.500H1081.500M926.500 412.500H931.500M926.500 758.500H931.500"/>
<path d="M926.500 413.500V757.500M931.500 413.500V757.500"/>
</g>
<g stroke="#ffffff" stroke-width="1" shape-rendering="auto"><path d="M771.500 401.500L776.500 407.500M1087.500 401.500L1081.500 407.500"/></g>
<!-- ground line -->
<path d="M394 763.500H611" stroke="#25c4c4"/><path d="M611 763.500H1235" stroke="#ffffff"/><path d="M1235 763.500H1530" stroke="#25c4c4"/>
<!-- blue / red polylines -->
<g stroke="#3b9ac4">
<path d="M607 409.500H1074M607.500 409V433M635.500 433V436"/>
<path d="M660 467.500H1074M660.500 467V497M695.500 497V500"/>
<path d="M1173 467.500H1264M1263.500 467V500"/>
</g>
<g stroke="#f2f2cc"><path d="M607 436.500H635M660 500.500H695"/></g>
<g stroke="#de7f76"><path d="M635 436.500H1074M695 500.500H1074M1173 436.500H1303M1173 500.500H1530"/></g>
<g fill="#3b9ac4" stroke="none" shape-rendering="auto"><circle cx="606.800" cy="409.200" r="2.200"/><circle cx="660.300" cy="466.800" r="2.200"/><circle cx="1263.500" cy="466.800" r="2.200"/></g>
<!-- dimensions -->
<g stroke="#c23c1e">
<path d="M771.500 380V399M1087.500 384V399M846.500 384V401M1057.500 384V401"/>
<path d="M771 385.500H801M816 385.500H944M960 385.500H1057M1057 385.500H1066M1077 385.500H1087"/>
<path d="M1085 412.500H1152M1085 758.500H1152M1148.500 412V579M1148.500 592V758"/>
</g>
<g stroke="#c8502e" shape-rendering="auto" stroke-width="1.200">
<path d="M767.500 388L772 381.500L775.500 384"/>
<path d="M1053.500 383L1058.500 385.500L1053.500 388z" fill="#c8502e"/>
<path d="M1085 383L1090 385.500L1085 388z" fill="#c8502e"/>
<path d="M1146.500 410.500L1150.500 414M1146.500 756.500L1150.500 760"/>
<circle cx="846.500" cy="385.500" r="1.200" fill="#c8502e"/>
</g>
<!-- leaders -->
<g stroke="#d0401e" shape-rendering="auto"><path d="M713.500 290.500H729.500L846 327.500"/><path d="M714 686.500H729L771 699.500"/></g>
<!-- UCS icon -->
<g>
<path d="M481.500 708V768.500H542" stroke="#ffffff"/>
<path d="M481.500 744.500H505.500M481.500 768.500H505.500" stroke="#d9706c"/>
<path d="M481.500 744.500V768.500M505.500 744.500V768.500" stroke="#30b070"/>
</g>
<g shape-rendering="auto" stroke-width="1.100">
<path d="M476 690L481.500 696L487 690M481.500 696V702" stroke="#30b070"/>
<path d="M549 762L558.500 775M558.500 762L549 775" stroke="#e0707a"/>
<path d="M489 750.500L492 762.500L495.500 751.500L499 762.500L502 750.500" stroke="#ffffff"/>
</g>
<!-- crosshair cursor -->
<g>
<path d="M1468 752.500H1530" stroke="#c0705e"/>
<path d="M1521.500 698V806" stroke="#2fb383"/>
<rect x="1517.500" y="748.500" width="8" height="8" stroke="#dcdcdc"/>
</g>
<!-- X marker -->
<g shape-rendering="auto" stroke="#f0f0f0" stroke-width="1.100"><path d="M1258 495L1269 506M1269 495L1258 506"/></g>
<!-- compass -->
<g shape-rendering="auto">
<circle cx="1480" cy="228.400" r="38.500" fill="#8a8b8d" stroke="none"/>
<g fill="#525357">
<path d="M1477 196h5.400l-2.700 4.200z"/><path d="M1477 261.200h5.400l-2.700 -4.200z"/>
<path d="M1447 225.700v5.400l4.200 -2.700z"/><path d="M1512.400 225.700v5.400l-4.200 -2.700z"/>
<path d="M1459.700 204v4.600h-4.600z"/><path d="M1499.800 204v4.600h4.600z"/>
<path d="M1459.700 253v-4.600h-4.600z"/><path d="M1499.800 253v-4.600h4.600z"/>
</g>
</g>
<!-- annotation text -->
<g font-family="Liberation Sans, sans-serif" font-size="8.800" font-weight="bold" fill="#f71a1a" stroke="none" shape-rendering="auto" lengthAdjust="spacingAndGlyphs">
<text x="624" y="283.700" textLength="85.500" lengthAdjust="spacingAndGlyphs">DECORATIVE GLASS PANEL</text>
<text x="578.500" y="293.600" textLength="131" lengthAdjust="spacingAndGlyphs">(BY OTHERS) RECESSED INTO MILLWORK</text>
<text x="642.800" y="303.300" textLength="66.700" lengthAdjust="spacingAndGlyphs">DIVIDER AND CEILING</text>

<text x="581.500" y="543.700" textLength="128.800" lengthAdjust="spacingAndGlyphs">HPL ON ¾" J-CORE PLYWOOD PRIVACY</text>
<text x="579.500" y="554.600" textLength="130.800" lengthAdjust="spacingAndGlyphs">SCREEN (¾" PLYWOOD FRAME) SECURED</text>
<text x="587.300" y="564.400" textLength="123" lengthAdjust="spacingAndGlyphs">TO FLOOR AND ADJACENT RECEPTION</text>
<text x="660.300" y="574.200" textLength="50" lengthAdjust="spacingAndGlyphs">WALL SECTIONS</text>

<text x="581.200" y="675.600" textLength="128.800" lengthAdjust="spacingAndGlyphs">HPL ON ¾" J-CORE PLYWOOD PRIVACY</text>
<text x="579.300" y="687.400" textLength="130.700" lengthAdjust="spacingAndGlyphs">SCREEN (¾" PLYWOOD FRAME) SECURED</text>
<text x="587" y="696.900" textLength="123" lengthAdjust="spacingAndGlyphs">TO FLOOR AND ADJACENT RECEPTION</text>
<text x="659.600" y="706.300" textLength="50.400" lengthAdjust="spacingAndGlyphs">WALL SECTIONS</text>

<text x="1184" y="543.800" textLength="129.200" lengthAdjust="spacingAndGlyphs">HPL ON ¾" J-CORE PLYWOOD PRIVACY</text>
<text x="1182.500" y="555.200" textLength="130.700" lengthAdjust="spacingAndGlyphs">SCREEN (¾" PLYWOOD FRAME) SECURED</text>
<text x="1190.300" y="564.800" textLength="122.900" lengthAdjust="spacingAndGlyphs">TO FLOOR AND ADJACENT RECEPTION</text>
<text x="1263" y="574.300" textLength="50.200" lengthAdjust="spacingAndGlyphs">WALL SECTIONS</text>

<text x="803.500" y="389" font-size="10" textLength="10.500" lengthAdjust="spacingAndGlyphs">10"</text>
<text x="946.200" y="389" font-size="10" textLength="11" lengthAdjust="spacingAndGlyphs">28"</text>
<text x="1068.600" y="389" font-size="10" textLength="7" lengthAdjust="spacingAndGlyphs">4"</text>
<text x="1142.500" y="589" font-size="10" textLength="11.500" lengthAdjust="spacingAndGlyphs">46"</text>
</g>
</svg>

<!-- command area -->
<div class="abs" style="left:402px;top:858px;width:1112px;height:72px;background:#848484"></div>
<div class="abs" style="left:1514px;top:858px;width:16px;height:72px;background:#f0f0f0"></div>
<div class="abs" style="left:1522px;top:896px;width:2px;height:17px;background:#8a8a8a"></div>
<div class="abs" style="left:1534px;top:157px;width:3px;height:793px;background:#2a2d31"></div>
<span class="cm" style="top:866px">'Shadow Display' 'Hatch' 'Multileader'</span>
<span class="cm" style="top:881px">Select entities to copy properties to or [Settings/selection options (?)]:</span>
<span class="cm" style="top:896px">Opposite Corner:</span>
<span class="cm" style="top:911px">Select entities to copy properties to or [Settings/selection options (?)]:</span>
<span class="cm" style="left:404px;top:933px;color:#f0f0f0">:</span><span class="cm" style="left:418px;top:933px;color:#a9acb1;font-style:italic">Enter command</span>
<svg width="20" height="60" viewBox="392 858 20 60" style="left:392px;top:858px" fill="none"><path d="M395.500 863L399.500 867M399.500 863L395.500 867" stroke="#e6e6e6" stroke-width="1.700"/><g fill="#e0e0e0"><rect x="398" y="891" width="2" height="2"/><rect x="398" y="895" width="2" height="2"/><rect x="398" y="899" width="2" height="2"/><rect x="398" y="903" width="2" height="2"/><rect x="398" y="907" width="2" height="2"/></g></svg>
<!-- layout tabs -->
<div class="abs" style="left:0;top:950px;width:1537px;height:60px;background:#18191d"></div>
<div class="abs" style="left:29px;top:955px;width:76px;height:24px;background:#2d3035;border-left:1px solid #4a4d52;border-right:1px solid #4a4d52"></div>
<span class="lt" style="left:61px;color:#f4f4f4;font-size:12px;top:962px;letter-spacing:-0.3px">Model</span>
<span class="lt" style="left:110px;letter-spacing:-0.7px">COVER</span>
<span class="lt" style="left:157px">A1</span>
<span class="lt" style="left:183px">A2</span>
<span class="lt" style="left:209.5px">1.01</span>
<span class="lt" style="left:242.4px">1.02</span>
<span class="lt" style="left:275.4px">1.03</span>
<span class="lt" style="left:309.2px">1.04</span>
<span class="lt" style="left:343.4px">1.05</span>
<span class="lt" style="left:377.4px">1.06</span>
<span class="lt" style="left:411px">1.07</span>
<span class="lt" style="left:445px">1.08</span>
<span class="lt" style="left:479px">1.09</span>
<span class="lt" style="left:513px">1.10</span>
<span class="lt" style="left:546.2px">1.11</span>
<span class="lt" style="left:578.6px">1.12</span>
<span class="lt" style="left:612px">1.13</span>
<span class="lt" style="left:646px">1.14</span>
<span class="lt" style="left:680px">1.15</span>
<span class="lt" style="left:714px">1.16</span>
<span class="lt" style="left:748px">1.17</span>
<span class="lt" style="left:782px">1.18</span>
<span class="lt" style="left:816px">1.19</span>
<span class="lt" style="left:850px">1.20</span>
<span class="lt" style="left:883px">1.21</span>
<span class="lt" style="left:916px">1.22</span>
<span class="lt" style="left:949px">1.23</span>
<span class="lt" style="left:983px">1.24</span>
<span class="lt" style="left:1017.5px">1.25</span>
<span class="lt" style="left:1051.4px">1.26</span>
<span class="lt" style="left:1085.6px">1.27</span>
<span class="lt" style="left:1119.5px">1.28</span>
<span class="lt" style="left:1153.7px">1.29</span>
<span class="lt" style="left:1187.6px">1.30</span>
<span class="lt" style="left:1220.8px">2.01</span>
<span class="lt" style="left:1254.4px">2.02</span>
<span class="lt" style="left:1289.3px">2.03</span>
<span class="lt" style="left:1323.2px">2.04</span>
<span class="lt" style="left:1358.8px">2.05</span>
<span class="lt" style="left:1393.8px">2.06</span>
<span class="lt" style="left:1428.7px">2.07</span>
<span class="lt" style="left:1463.7px">2.08</span>
<i class="ls" style="left:151px"></i>
<i class="ls" style="left:176px"></i>
<i class="ls" style="left:203px"></i>
<i class="ls" style="left:235px"></i>
<i class="ls" style="left:269px"></i>
<i class="ls" style="left:302px"></i>
<i class="ls" style="left:336px"></i>
<i class="ls" style="left:370px"></i>
<i class="ls" style="left:404px"></i>
<i class="ls" style="left:439px"></i>
<i class="ls" style="left:473px"></i>
<i class="ls" style="left:507px"></i>
<i class="ls" style="left:540px"></i>
<i class="ls" style="left:572px"></i>
<i class="ls" style="left:606px"></i>
<i class="ls" style="left:640px"></i>
<i class="ls" style="left:674px"></i>
<i class="ls" style="left:708px"></i>
<i class="ls" style="left:742px"></i>
<i class="ls" style="left:775px"></i>
<i class="ls" style="left:809px"></i>
<i class="ls" style="left:843px"></i>
<i class="ls" style="left:878px"></i>
<i class="ls" style="left:910px"></i>
<i class="ls" style="left:944px"></i>
<i class="ls" style="left:977px"></i>
<i class="ls" style="left:1010px"></i>
<i class="ls" style="left:1044px"></i>
<i class="ls" style="left:1078px"></i>
<i class="ls" style="left:1112px"></i>
<i class="ls" style="left:1146px"></i>
<i class="ls" style="left:1180px"></i>
<i class="ls" style="left:1214px"></i>
<i class="ls" style="left:1247px"></i>
<i class="ls" style="left:1282px"></i>
<i class="ls" style="left:1316px"></i>
<i class="ls" style="left:1351px"></i>
<i class="ls" style="left:1386px"></i>
<i class="ls" style="left:1421px"></i>
<i class="ls" style="left:1456px"></i>
<svg width="1537" height="70" viewBox="0 950 1537 70" style="left:0;top:950px" fill="none">
<path d="M11 963.500H23M11 967.500H23M11 971.500H23" stroke="#4d5055" stroke-width="1"/>
<g stroke="#c9ccd1" stroke-width="1.100"><rect x="41.500" y="961.500" width="13" height="11.500"/><path d="M44.500 964V970.500H51.500" stroke-width="1"/><path d="M46.500 970.500h1M49 970.500h1" stroke-width="1"/></g>
<path d="M1496 966.500H1510M1503 959.500V973.500" stroke="#e8e8e8" stroke-width="1.200"/>
<!-- status bar icons -->
<g stroke="#e0e0e0" stroke-width="1.100"><rect x="600.500" y="990.500" width="15" height="13"/><path d="M603.500 993V1001H611" stroke-width="1"/><path d="M605 996.500h1.500M608 1000h1" stroke-width="0.800"/></g>
<g stroke="#c0c3c8" stroke-width="1.100"><path d="M650.500 995l3.500 3.500l3.500-3.500M816.500 995l3.500 3.500l3.500-3.500M878.500 995l3.500 3.500l3.500-3.500M987.500 995l3.500 3.500l3.500-3.500M1225.500 995l3.500 3.500l3.500-3.500"/></g>
<path d="M671 997.500H728" stroke="#f0f0f0" stroke-width="1"/>
<g stroke="#55585d" stroke-width="1.200"><rect x="1014.500" y="990.500" width="8" height="6"/><path d="M1017 993.500h3M1014.500 999v5h5"/><rect x="1023.500" y="999.500" width="6" height="4.500"/><path d="M1024.800 999.500v-1.500a1.700 1.700 0 0 1 3.400 0v1.500"/>
<path d="M1088.500 994v-3.500h3.500M1097 990.500h3.500v3.500M1100.500 1000v3.500h-3.500M1092 1003.500h-3.500v-3.500" /><rect x="1091.500" y="995.500" width="6" height="5" stroke-width="1"/></g>
<g stroke="#f0f0f0" stroke-width="1.200"><path d="M1117.500 990V1004M1122.500 990V1004M1113 994.500H1127M1113 999.500H1127"/></g>
<g stroke="#e04848" stroke-width="1.200"><path d="M1172.500 990V1004M1177.500 990V1004M1168 994.500H1182M1168 999.500H1182"/></g>
<g stroke-width="1.300"><path d="M1247.500 990.500V1003.500" stroke="#3fc060"/><path d="M1247 1003.500H1260" stroke="#e04040"/><path d="M1247.500 997.500H1253.500V1003" stroke="#e0e0e0" stroke-width="1.100"/></g>
<!-- POLAR / STRACK / ESNAP buttons -->
<g stroke="#3b74d4" stroke-width="1.200" fill="#222a3a"><rect x="1308.500" y="987.500" width="81" height="19" rx="3"/><path d="M1371.500 987.500V1006.500"/><rect x="1392.500" y="987.500" width="68" height="19" rx="3"/><rect x="1463.500" y="987.500" width="80" height="19" rx="3"/><path d="M1526.500 987.500V1006.500"/></g>
<g stroke="#e0e0e0" stroke-width="1.100"><circle cx="1319.500" cy="997.500" r="4.800"/><path d="M1319.500 997.500H1327M1319.500 997.500L1324 992"/></g>
<g stroke="#e0e0e0" stroke-width="1.100"><path d="M1377 995.500l3.500 3.500l3.500-3.500M1529.500 995.500l3.500 3.500l3.500-3.500"/></g>
<g stroke-width="1.200"><path d="M1398 1003.500L1410 991.500" stroke="#e0e0e0"/><path d="M1398 1003.500H1410" stroke="#e04040"/><circle cx="1398" cy="1003.500" r="1.300" fill="#e04040" stroke="none"/></g>
<g stroke="#e84a4a" stroke-width="2.400"><path d="M1470.500 1003.500V997a4.200 4.200 0 0 1 8.400 0V1003.500"/></g>
<g stroke="#f0f0f0" stroke-width="2.400"><path d="M1470.500 1001.500V1003.800M1478.900 1001.500V1003.800"/></g>
</svg>
<!-- status text -->
<span class="st" style="left:445px;letter-spacing:-0.2px">3084.0990, -958.5738, 0.0000</span>
<span class="st" style="left:620px;">TILE</span>
<span class="st" style="left:733px;font-size:12px">ByLayer</span>
<span class="st" style="left:843px;font-size:12px;letter-spacing:-0.2px">F_1-2</span>
<span class="st" style="left:905px;font-size:12px;letter-spacing:-0.35px">1-1-2NORMAL</span>
<span class="st" style="left:1034px;color:#5a5d62">VPLOCK</span>
<span class="st" style="left:1132px;">GRID</span>
<span class="st" style="left:1187px;">SNAP</span>
<span class="st" style="left:1265px;">ORTHO</span>
<span class="st" style="left:1332px;">POLAR</span>
<span class="st" style="left:1415.5px;letter-spacing:-0.2px">STRACK</span>
<span class="st" style="left:1486.5px;">ESNAP</span>
<!-- taskbar sliver -->
<div class="abs" style="left:0;top:1010px;width:1537px;height:10px;background:linear-gradient(#39485f 0,#30415a 2px,#2e3f58 100%)"></div>
<div class="abs" style="left:65px;top:1018.500px;width:205px;height:4px;background:#4d5d77;border-radius:3px 3px 0 0"></div>
<div class="abs" style="left:605px;top:1018.500px;width:40px;height:4px;background:#3f4f69;border-radius:3px 3px 0 0"></div>
</body>
</html>
